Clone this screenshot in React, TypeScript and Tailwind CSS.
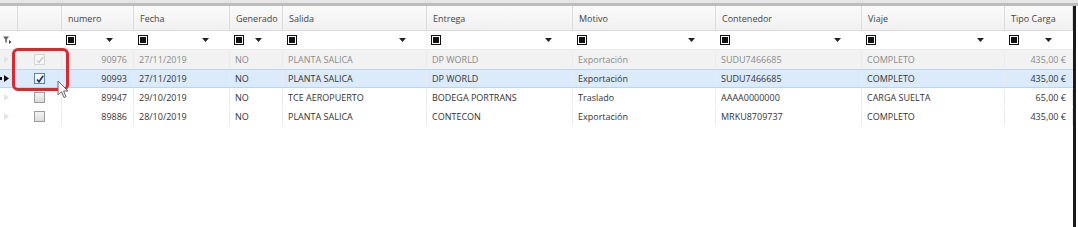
import React from 'react'

type Col = { key: string; label: string; w: string; align?: 'right' }

const cols: Col[] = [
  { key: 'numero', label: 'numero', w: 'w-[72px]', align: 'right' },
  { key: 'fecha', label: 'Fecha', w: 'w-[96px]' },
  { key: 'generado', label: 'Generado', w: 'w-[53px]' },
  { key: 'salida', label: 'Salida', w: 'w-[144px]' },
  { key: 'entrega', label: 'Entrega', w: 'w-[146px]' },
  { key: 'motivo', label: 'Motivo', w: 'w-[143px]' },
  { key: 'contenedor', label: 'Contenedor', w: 'w-[146px]' },
  { key: 'viaje', label: 'Viaje', w: 'w-[143px]' },
  { key: 'tipo', label: 'Tipo Carga', w: 'w-[68px]', align: 'right' },
]

type Row = Record<string, string>

const rows: Row[] = [
  { numero: '90976', fecha: '27/11/2019', generado: 'NO', salida: 'PLANTA SALICA', entrega: 'DP WORLD', motivo: 'Exportación', contenedor: 'SUDU7466685', viaje: 'COMPLETO', tipo: '435,00 €' },
  { numero: '90993', fecha: '27/11/2019', generado: 'NO', salida: 'PLANTA SALICA', entrega: 'DP WORLD', motivo: 'Exportación', contenedor: 'SUDU7466685', viaje: 'COMPLETO', tipo: '435,00 €' },
  { numero: '89947', fecha: '29/10/2019', generado: 'NO', salida: 'TCE AEROPUERTO', entrega: 'BODEGA PORTRANS', motivo: 'Traslado', contenedor: 'AAAA0000000', viaje: 'CARGA SUELTA', tipo: '65,00 €' },
  { numero: '89886', fecha: '28/10/2019', generado: 'NO', salida: 'PLANTA SALICA', entrega: 'CONTECON', motivo: 'Exportación', contenedor: 'MRKU8709737', viaje: 'COMPLETO', tipo: '435,00 €' },
]

const FilterBox = () => (
  <span className="inline-flex w-[10px] h-[10px] border border-[#111] items-center justify-center bg-white">
    <span className="w-[6px] h-[6px] bg-[#111]" />
  </span>
)

const Arrow = () => (
  <svg width="7" height="4" viewBox="0 0 7 4">
    <path d="M0 0 L7 0 L3.5 4 Z" fill="#222" />
  </svg>
)

const RowMark = ({ dark }: { dark?: boolean }) => (
  <svg width="5" height="7" viewBox="0 0 5 7">
    <path d="M0 0 L5 3.5 L0 7 Z" fill={dark ? '#111' : '#e4e4e4'} />
  </svg>
)

const Check = ({ state }: { state: 'disabled' | 'checked' | 'off' }) => {
  if (state === 'disabled')
    return (
      <span className="flex w-[11px] h-[11px] border border-[#d4d4d4] bg-[#f7f7f7] items-center justify-center">
        <svg width="8" height="8" viewBox="0 0 8 8">
          <path d="M1 4.5 L3 6.5 L7 1" stroke="#c8c8c8" strokeWidth="1.3" fill="none" />
        </svg>
      </span>
    )
  if (state === 'checked')
    return (
      <span className="flex w-[11px] h-[11px] border border-[#5f7fb0] bg-gradient-to-b from-[#ffffff] to-[#e4eefa] items-center justify-center">
        <svg width="8" height="8" viewBox="0 0 8 8">
          <path d="M1 4.5 L3 6.8 L7.2 0.8" stroke="#1b2a6e" strokeWidth="1.6" fill="none" />
        </svg>
      </span>
    )
  return <span className="block w-[11px] h-[11px] border border-[#9d9d9d] bg-gradient-to-b from-[#f4f4f4] to-[#dcdcdc]" />
}

export default function App() {
  return (
    <div className="relative w-[1078px] h-[227px] bg-white overflow-hidden text-[9px] leading-none" style={{ fontFamily: '"Open Sans", "Noto Sans", sans-serif' }}>
      <div className="h-[3px] bg-[#e6e6e6]" />
      <div className="h-[3px] bg-[#bcbcbc]" />
      <div className="flex h-[221px]">
        <div className="w-[1073px] flex flex-col">
          {/* Header */}
          <div className="flex h-[25px] bg-gradient-to-b from-[#fafafa] to-[#f1f1f1] border-b border-[#dadada] text-[#444]">
            <div className="w-[18px] border-r border-[#dcdcdc]" />
            <div className="w-[44px] border-r border-[#dcdcdc]" />
            {cols.map((c) => (
              <div key={c.key} className={`${c.w} shrink-0 border-r border-[#dcdcdc] flex items-center pl-[6px] pt-[1px]`}>
                {c.label}
              </div>
            ))}
          </div>
          {/* Filter row */}
          <div className="flex h-[19px] bg-white border-b border-[#ececec]">
            <div className="w-[18px] flex items-center pl-[3px]">
              <svg width="9" height="9" viewBox="0 0 9 9">
                <path d="M0 0.5 L6 0.5 L3.8 3.5 L3.8 7 L2.2 6 L2.2 3.5 Z" fill="#666" />
                <path d="M6 4 L8.5 6 L6 8 Z" fill="#444" />
              </svg>
            </div>
            <div className="w-[44px]" />
            {cols.map((c) => (
              <div key={c.key} className={`${c.w} shrink-0 flex items-center justify-between pl-[4px] pr-[21px]`}>
                <FilterBox />
                <Arrow />
              </div>
            ))}
          </div>
          {/* Rows */}
          {rows.map((r, i) => {
            const rowCls =
              i === 0
                ? 'bg-[#f2f2f2] text-[#8a8a8a] border-y border-transparent'
                : i === 1
                ? 'bg-[#dcebfb] text-[#333] border-y border-[#b7d5f4]'
                : 'bg-white text-[#333] border-y border-transparent'
            return (
              <div key={r.numero} className={`flex h-[19px] ${rowCls}`}>
                <div className="w-[18px] flex items-center pl-[4px] relative">
                  {i === 1 && <span className="absolute left-0 top-[7px] w-[2px] h-[3px] bg-[#111]" />}
                  <RowMark dark={i === 1} />
                </div>
                <div className="w-[44px] border-r border-[#ebebeb] flex items-center justify-center">
                  <Check state={i === 0 ? 'disabled' : i === 1 ? 'checked' : 'off'} />
                </div>
                {cols.map((c) => (
                  <div
                    key={c.key}
                    className={`${c.w} shrink-0 border-r border-[#ebebeb] flex items-center ${
                      c.align === 'right' ? 'justify-end pr-[6px]' : 'pl-[5px]'
                    }`}
                  >
                    {r[c.key]}
                  </div>
                ))}
              </div>
            )
          })}
          <div className="flex-1" />
        </div>
        <div className="w-[3px] bg-[#1a1a1a]" />
        <div className="flex-1 bg-white" />
      </div>

      {/* red highlight around checkbox */}
      <div className="absolute left-[12px] top-[48px] w-[57px] h-[43px] border-[3px] border-[#e52329] rounded-[6px]" />

      {/* mouse pointer */}
      <svg className="absolute left-[57px] top-[80px]" width="13" height="19" viewBox="0 0 13 19">
        <path d="M1 1 L1 15 L4.5 11.8 L7 17.5 L9 16.6 L6.6 11 L11 11 Z" fill="#f4f4f4" stroke="#666" strokeWidth="1" strokeLinejoin="round" />
      </svg>
    </div>
  )
}
